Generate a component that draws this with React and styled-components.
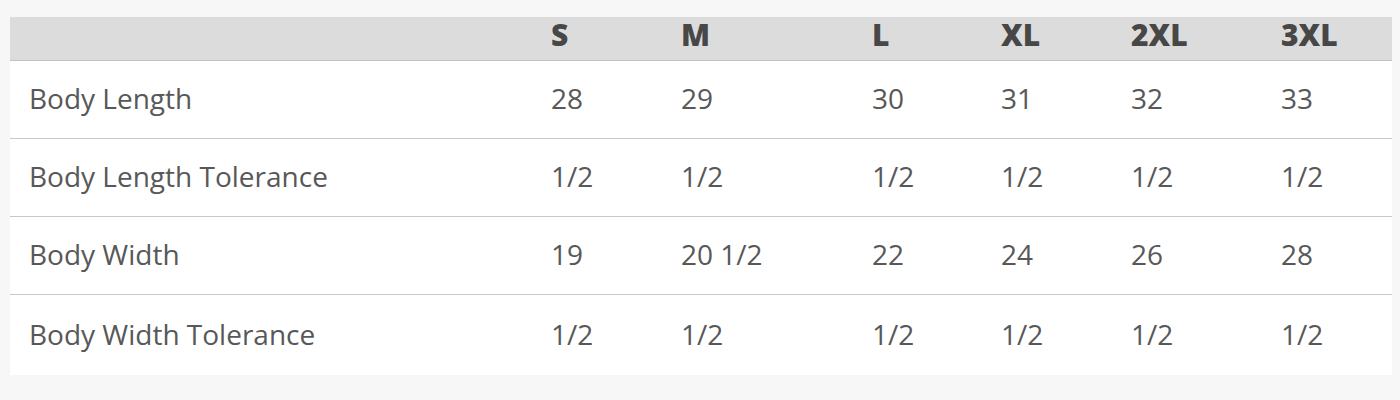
import React from "react";
import styled, { createGlobalStyle } from "styled-components";

const GlobalStyle = createGlobalStyle`
	body {
		margin: 0;
		background: #f7f7f7;
		font-family: "Open Sans", "Liberation Sans", sans-serif;
	}
`;

const Page = styled.div`
	padding: 17px 8px 25px 10px;
`;

const Table = styled.table`
	width: 1382px;
	table-layout: fixed;
	border-collapse: collapse;
	background: #ffffff;
`;

const Col = styled.col`
	width: ${(p) => p.$w}px;
`;

const HeadCell = styled.th`
	height: 43px;
	box-sizing: border-box;
	padding: 0 0 6px 20px;
	background: #dcdcdc;
	border-bottom: 1px solid #c2c2c2;
	text-align: left;
	font-size: 30px;
	font-weight: 800;
	color: #474747;
	line-height: 1;
	white-space: nowrap;
`;

const Row = styled.tr`
	border-bottom: ${(p) => (p.$last ? "none" : "1px solid #c8c8c8")};
`;

const Cell = styled.td`
	height: ${(p) => (p.$last ? 78 : 75)}px;
	padding: 0 0 2px ${(p) => (p.$label ? 19 : 20)}px;
	font-size: 28px;
	color: #585858;
	line-height: 1;
	white-space: nowrap;
`;

const sizes = ["S", "M", "L", "XL", "2XL", "3XL"];
const widths = [521, 130, 191, 129, 130, 150, 131];

const rows = [
	{ label: "Body Length", values: ["28", "29", "30", "31", "32", "33"] },
	{ label: "Body Length Tolerance", values: ["1/2", "1/2", "1/2", "1/2", "1/2", "1/2"] },
	{ label: "Body Width", values: ["19", "20 1/2", "22", "24", "26", "28"] },
	{ label: "Body Width Tolerance", values: ["1/2", "1/2", "1/2", "1/2", "1/2", "1/2"] },
];

const App = () => {
	return (
		<>
			<GlobalStyle />
			<Page>
				<Table>
					<colgroup>
						{widths.map((w, i) => (
							<Col key={i} $w={w} />
						))}
					</colgroup>
					<thead>
						<tr>
							<HeadCell />
							{sizes.map((s) => (
								<HeadCell key={s}>{s}</HeadCell>
							))}
						</tr>
					</thead>
					<tbody>
						{rows.map((r, i) => {
							const last = i === rows.length - 1;
							return (
								<Row key={r.label} $last={last}>
									<Cell $last={last} $label>
										{r.label}
									</Cell>
									{r.values.map((v, j) => (
										<Cell key={j} $last={last}>
											{v}
										</Cell>
									))}
								</Row>
							);
						})}
					</tbody>
				</Table>
			</Page>
		</>
	);
};

export default App;
